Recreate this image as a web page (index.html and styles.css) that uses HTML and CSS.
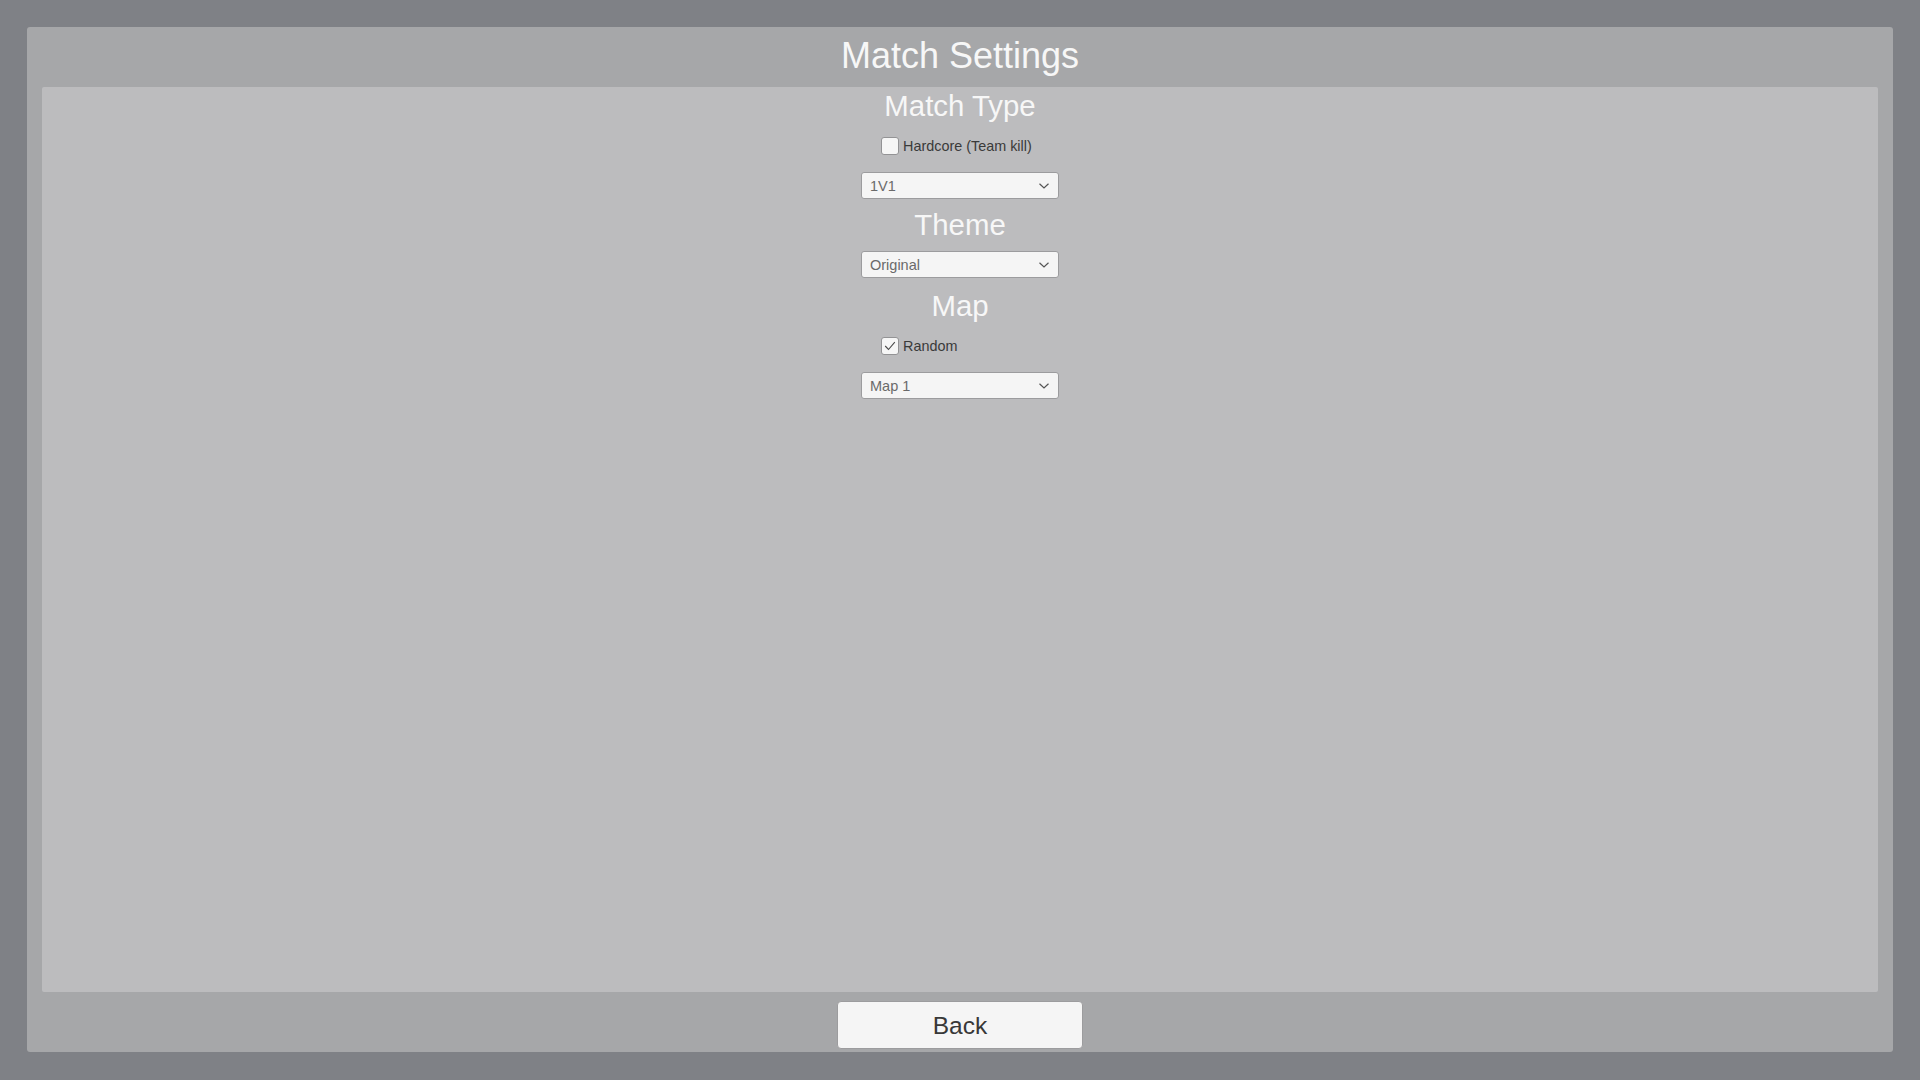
FILE: index.html
```html
<!DOCTYPE html>
<html lang="en">
<head>
<meta charset="utf-8">
<title>Match Settings</title>
<link rel="stylesheet" href="styles.css">
</head>
<body>
<div class="window">
  <div class="window-title">Match Settings</div>
  <div class="content">
    <div class="section-title st-first">Match Type</div>
    <label class="toggle toggle-first">
      <span class="box"></span>
      <span class="toggle-label">Hardcore (Team kill)</span>
    </label>
    <div class="dropdown dd-first">
      <span class="dd-text">1V1</span>
      <svg class="chev" width="10" height="6" viewBox="0 0 10 6"><path d="M0.5 0.8 L5 5 L9.5 0.8" fill="none" stroke="#555" stroke-width="1.2"/></svg>
    </div>
    <div class="section-title st-theme">Theme</div>
    <div class="dropdown dd-theme">
      <span class="dd-text">Original</span>
      <svg class="chev" width="10" height="6" viewBox="0 0 10 6"><path d="M0.5 0.8 L5 5 L9.5 0.8" fill="none" stroke="#555" stroke-width="1.2"/></svg>
    </div>
    <div class="section-title st-map">Map</div>
    <label class="toggle toggle-map">
      <span class="box checked">
        <svg width="12" height="10" viewBox="0 0 12 10"><path d="M1.2 5 L4.5 8.5 L10.8 1.2" fill="none" stroke="#4a4a4a" stroke-width="1.1"/></svg>
      </span>
      <span class="toggle-label">Random</span>
    </label>
    <div class="dropdown dd-map">
      <span class="dd-text">Map 1</span>
      <svg class="chev" width="10" height="6" viewBox="0 0 10 6"><path d="M0.5 0.8 L5 5 L9.5 0.8" fill="none" stroke="#555" stroke-width="1.2"/></svg>
    </div>
  </div>
  <div class="footer">
    <button class="back-btn">Back</button>
  </div>
</div>
</body>
</html>
```

FILE: styles.css
```css
html, body {
  margin: 0;
  padding: 0;
}
body {
  background: #7f8186;
  width: 1920px;
  height: 1080px;
  padding: 27px 27px 28px 27px;
  box-sizing: border-box;
  font-family: "Liberation Sans", Arial, sans-serif;
  overflow: hidden;
}
.window {
  background: #a6a7a9;
  height: 1025px;
  border-radius: 3px;
  display: flex;
  flex-direction: column;
}
.window-title {
  height: 60px;
  box-sizing: border-box;
  padding-top: 8px;
  text-align: center;
  color: #f7f7f7;
  font-size: 36px;
  line-height: 41px;
}
.content {
  margin: 0 15px;
  height: 905px;
  background: #bcbcbe;
  border-radius: 2px;
  display: flex;
  flex-direction: column;
  align-items: center;
}
.section-title {
  color: #f7f7f7;
  font-size: 29.4px;
  line-height: 36px;
  height: 36px;
  text-align: center;
}
.st-first { padding-top: 1px; }
.st-theme { margin-top: 7.5px; }
.st-map { margin-top: 9.3px; }
.toggle {
  width: 198px;
  height: 24px;
  box-sizing: border-box;
  padding-left: 20px;
  display: flex;
  align-items: center;
}
.toggle-first { margin-top: 10px; }
.toggle-map { margin-top: 10.5px; }
.box {
  width: 18px;
  height: 18px;
  box-sizing: border-box;
  background: #f6f6f6;
  border: 1px solid #939395;
  border-radius: 3px;
  display: flex;
  align-items: center;
  justify-content: center;
}
.toggle-label {
  margin-left: 4px;
  color: #3a3a3a;
  font-size: 14.4px;
  line-height: 17px;
}
.dropdown {
  width: 198px;
  height: 27px;
  box-sizing: border-box;
  background: #f5f5f5;
  border: 1px solid #9c9c9e;
  border-radius: 3px;
  display: flex;
  align-items: center;
  justify-content: space-between;
  padding: 1px 9px 0 8px;
}
.dd-first { margin-top: 14px; }
.dd-theme { margin-top: 8.9px; }
.dd-map { margin-top: 14px; }
.dd-text {
  color: #6a6a6a;
  font-size: 14.5px;
  line-height: 17px;
}
.chev {
  display: block;
  margin-top: -1px;
}
.footer {
  flex: 1;
  display: flex;
  justify-content: center;
  padding-top: 9px;
  box-sizing: border-box;
}
.back-btn {
  width: 246.7px;
  height: 48px;
  box-sizing: border-box;
  background: #f5f5f5;
  border: 1px solid #9c9c9e;
  border-radius: 4px;
  color: #383838;
  font-family: "Liberation Sans", Arial, sans-serif;
  font-size: 24.5px;
  line-height: 28px;
  padding: 0;
  padding-top: 1px;
}
```
